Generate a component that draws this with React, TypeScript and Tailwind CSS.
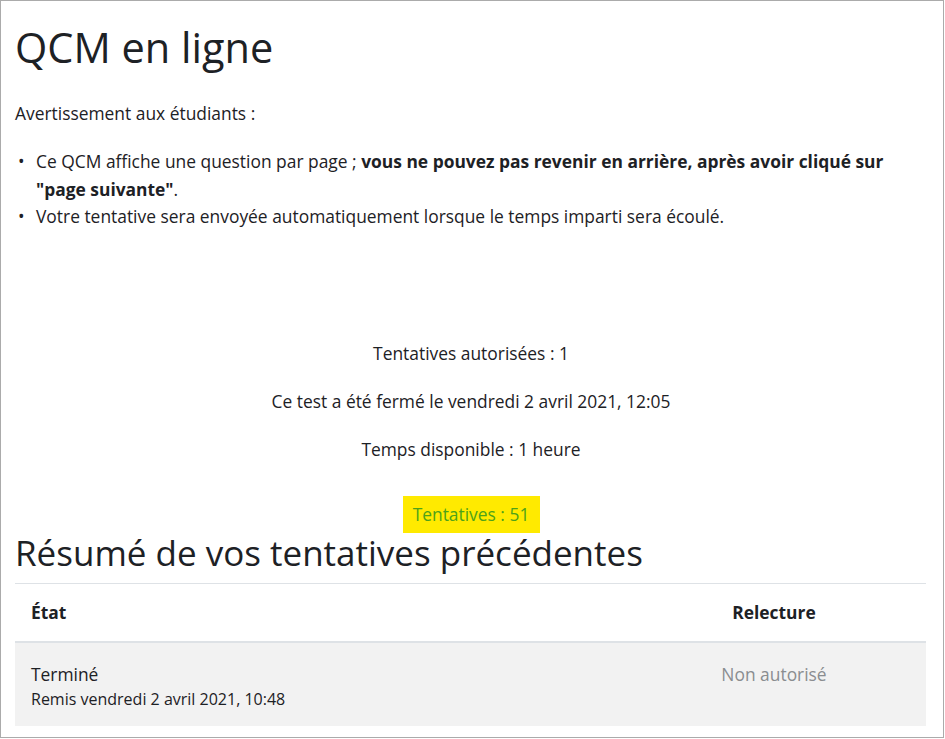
export default function App() {
  const font = { fontFamily: '"Open Sans", "Noto Sans", sans-serif' };

  return (
    <div className="w-[945px] h-[739px] bg-white overflow-hidden" style={font}>
      <div className="w-[944px] h-[738px] border border-[#ababab] px-[14px] text-[#1d2125]">

        {/* TITRE */}
        <h1 className="mt-[25px] text-[41.5px] leading-[43px] font-normal">QCM en ligne</h1>

        {/* AVERTISSEMENT */}
        <p className="mt-[33px] text-[17.4px] leading-[22px]">Avertissement aux étudiants :</p>
        <ul className="mt-[24px] text-[17.4px] leading-[27.5px]">
          <li className="flex">
            <span className="w-[21px] pl-[3px] shrink-0">•</span>
            <span>
              Ce QCM affiche une question par page ;{' '}
              <b className="font-bold">vous ne pouvez pas revenir en arrière, après avoir cliqué sur "page suivante"</b>.
            </span>
          </li>
          <li className="flex">
            <span className="w-[21px] pl-[3px] shrink-0">•</span>
            <span>Votre tentative sera envoyée automatiquement lorsque le temps imparti sera écoulé.</span>
          </li>
        </ul>

        {/* INFOS */}
        <div className="mt-[111px] flex flex-col items-center gap-[26px] text-[17.4px] leading-[22px] pr-[2px]">
          <p>Tentatives autorisées : 1</p>
          <p>Ce test a été fermé le vendredi 2 avril 2021, 12:05</p>
          <p>Temps disponible : 1 heure</p>
        </div>
        <div className="mt-[36px] flex justify-center">
          <span className="ml-[-2px] bg-[#ffea00] text-[#4da21a] text-[17.4px] leading-[37px] w-[137px] text-center">
            Tentatives : 51
          </span>
        </div>

        {/* RESUME */}
        <h2 className="mt-[2px] text-[35px] leading-[36px] font-normal">Résumé de vos tentatives précédentes</h2>
        <div className="mt-[12px] w-[911px] border-t border-[#dee2e6]">
          <table className="w-full text-[17.4px]">
            <thead>
              <tr className="border-b-2 border-[#dee2e6]">
                <th className="h-[58px] px-[16px] text-left font-bold">État</th>
                <th className="h-[58px] w-[302px] text-center font-bold pr-[2px]">Relecture</th>
              </tr>
            </thead>
            <tbody>
              <tr className="bg-[#f2f2f2] align-top">
                <td className="h-[84px] px-[16px] pt-[20px]">
                  <div className="leading-[22px]">Terminé</div>
                  <div className="text-[16px] leading-[20px] mt-[4px]">Remis vendredi 2 avril 2021, 10:48</div>
                </td>
                <td className="pt-[20px] text-center text-[#8a8d90] leading-[22px] pr-[2px]">Non autorisé</td>
              </tr>
            </tbody>
          </table>
        </div>
      </div>
    </div>
  );
}
